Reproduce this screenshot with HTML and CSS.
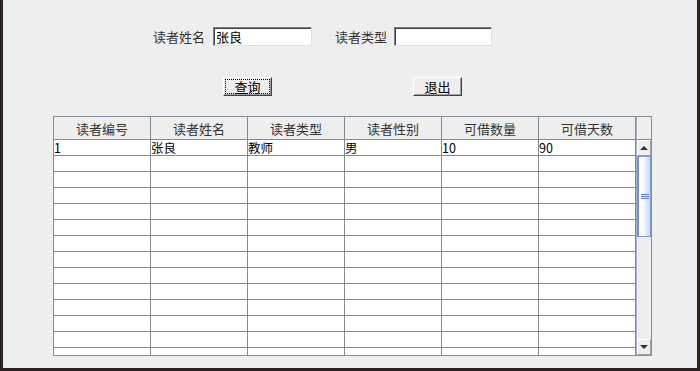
FILE: index.html
```html
<!DOCTYPE html>
<html lang="zh">
<head>
    <meta charset="UTF-8">
    <title>读者查询</title>
    <link rel="stylesheet" href="styles.css">
</head>
<body>
    <div class="window">
        <div class="search-row">
            <label class="field-label" for="readerName">读者姓名</label>
            <input class="text-field" type="text" id="readerName" value="张良">
            <label class="field-label second" for="readerType">读者类型</label>
            <input class="text-field narrow" type="text" id="readerType">
        </div>

        <div class="button-row">
            <button class="btn focused" type="button"><span>查询</span></button>
            <button class="btn exit" type="button"><span>退出</span></button>
        </div>

        <div class="scroll-pane">
            <div class="table-area">
                <table>
                    <thead>
                        <tr>
                            <th>读者编号</th>
                            <th>读者姓名</th>
                            <th>读者类型</th>
                            <th>读者性别</th>
                            <th>可借数量</th>
                            <th>可借天数</th>
                        </tr>
                    </thead>
                    <tbody id="resultBody">
                        <tr>
                            <td>1</td>
                            <td>张良</td>
                            <td>教师</td>
                            <td>男</td>
                            <td>10</td>
                            <td>90</td>
                        </tr>
                    </tbody>
                </table>
            </div>
            <div class="scrollbar">
                <div class="corner"></div>
                <div class="arrow up"><span></span></div>
                <div class="track">
                    <div class="thumb"><i></i><i></i><i></i></div>
                </div>
                <div class="arrow down"><span></span></div>
            </div>
        </div>
    </div>
    <script>
        // 空行填满表格
        const body = document.getElementById('resultBody');
        for (let i = 0; i < 13; i++) {
            const row = document.createElement('tr');
            row.innerHTML = '<td></td><td></td><td></td><td></td><td></td><td></td>';
            body.appendChild(row);
        }
    </script>
</body>
</html>
```

FILE: styles.css
```css
body {
    margin: 0;
    background: #2b2320;
    font-family: "Noto Sans CJK SC", "DejaVu Sans", sans-serif;
    font-size: 12px;
    color: #222222;
}
.window {
    width: 694px;
    height: 368px;
    margin-left: 3px;
    background: #eeeeee;
    overflow: hidden;
}
.search-row {
    display: flex;
    align-items: center;
    padding: 27px 0 0 150px;
    height: 19px;
}
.field-label {
    flex: none;
    width: 52px;
    white-space: nowrap;
    line-height: 19px;
    font-size: 13px;
    color: #333333;
}
.field-label.second {
    margin-left: 23px;
}
.text-field {
    flex: none;
    box-sizing: border-box;
    width: 99px;
    height: 19px;
    margin: 0 0 0 8px;
    padding: 0 2px;
    border: 1px solid;
    border-color: #808080 #e0e0e0 #e0e0e0 #808080;
    box-shadow: inset 1px 1px 0 #404040;
    background: #ffffff;
    font-family: inherit;
    font-size: 13px;
    color: #000000;
    outline: none;
}
.text-field.narrow {
    width: 98px;
    margin-left: 7px;
}
.button-row {
    display: flex;
    padding: 31px 0 0 220px;
    height: 19px;
}
.btn {
    box-sizing: border-box;
    width: 49px;
    height: 19px;
    padding: 1px;
    border: 1px solid;
    border-color: #ffffff #404040 #404040 #ffffff;
    box-shadow: inset -1px -1px 0 #a0a0a0;
    background: #eeeeee;
    font-family: inherit;
    font-size: 13px;
    color: #000000;
    cursor: pointer;
}
.btn span {
    display: block;
    height: 15px;
    line-height: 13px;
    box-sizing: border-box;
    border: 1px dotted transparent;
}
.btn.focused span {
    border-color: #000000;
}
.btn.exit {
    margin-left: 141px;
}
.scroll-pane {
    display: flex;
    margin: 20px 0 0 50px;
    width: 597px;
    height: 238px;
    border: 1px solid #8090a0;
    background: #eeeeee;
    overflow: hidden;
}
.table-area {
    width: 582px;
    background: #ffffff;
    overflow: hidden;
}
table {
    border-collapse: collapse;
    table-layout: fixed;
    width: 582px;
}
th, td {
    width: 96px;
    border-right: 1px solid #7d8b99;
    border-bottom: 1px solid #7d8b99;
    padding: 0;
    text-align: left;
    font-weight: normal;
    white-space: nowrap;
    overflow: hidden;
}
th {
    height: 22px;
    background: #eeeeee;
    text-align: center;
    color: #333333;
    font-size: 13px;
}
td {
    height: 15px;
    line-height: 15px;
    font-size: 12.5px;
    color: #000000;
}
.scrollbar {
    display: flex;
    flex-direction: column;
    width: 15px;
    border-left: 1px solid #a8b4c4;
    box-sizing: border-box;
}
.corner {
    height: 22px;
    border-bottom: 1px solid #7d8b99;
    background: #eeeeee;
}
.arrow {
    height: 16px;
    display: flex;
    align-items: center;
    justify-content: center;
    background: #eeeeee;
    border: 1px solid #ffffff;
    border-right-color: #a0a0a0;
    border-bottom-color: #a0a0a0;
    box-sizing: border-box;
}
.arrow span {
    width: 0;
    height: 0;
    border-left: 4px solid transparent;
    border-right: 4px solid transparent;
}
.arrow.up span {
    border-bottom: 4px solid #333333;
}
.arrow.down span {
    border-top: 4px solid #333333;
}
.track {
    flex: 1;
    background: #eeeeee;
}
.thumb {
    height: 81px;
    box-sizing: border-box;
    border: 1px solid #7a9ad0;
    border-left: 2px solid #7090d0;
    background: linear-gradient(to right, #f4f8ff, #ffffff 30%, #c8d8f0);
    display: flex;
    flex-direction: column;
    justify-content: center;
    align-items: center;
    gap: 1px;
}
.thumb i {
    display: block;
    width: 8px;
    height: 1px;
    background: #5a7cc8;
}
```
